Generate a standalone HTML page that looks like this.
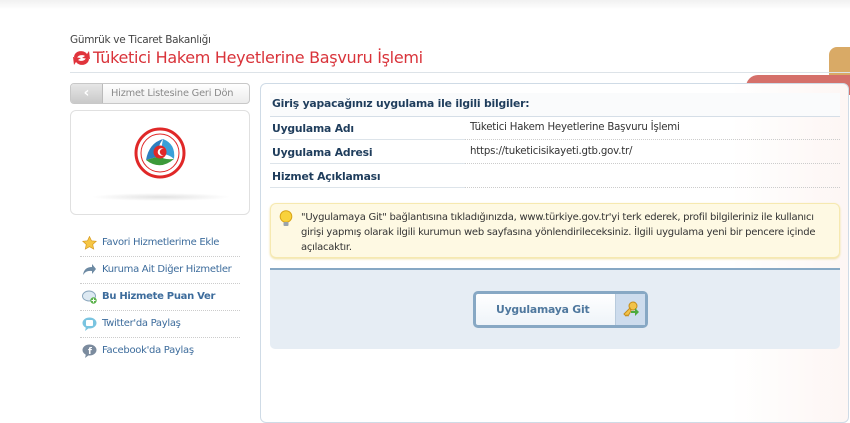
<!DOCTYPE html>
<html><head><meta charset="utf-8"><style>
*{margin:0;padding:0;box-sizing:border-box}
body{width:850px;height:414px;overflow:hidden;background:#fff;font-family:"DejaVu Sans","Liberation Sans",sans-serif;position:relative;color:#333}
.abs{position:absolute}
.topbar{left:0;top:0;width:850px;height:9px;background:linear-gradient(#f1f1f1,#fafafa 70%,#fff)}
.sub{left:70px;top:34px;font-size:10.5px;color:#444;letter-spacing:-0.3px}
.title{left:93px;top:48px;font-size:16px;color:#d9333a;letter-spacing:-0.3px}
.hr{left:70px;top:72px;width:780px;height:1px;background:#dde3e8}
.back{left:70px;top:83px;width:180px;height:21px;border:1px solid #c8c8c8;border-radius:4px;background:linear-gradient(#fff,#ececec)}
.back .l{position:absolute;left:0;top:0;width:32px;height:19px;background:linear-gradient(#e6e6e6,#c9c9c9);border-right:1px solid #bbb;border-radius:3px 0 0 3px;color:#fff;font-size:14px;text-align:center;line-height:18px;font-weight:bold}
.back .t{position:absolute;left:40px;top:4px;font-size:9.8px;color:#8a8a8a;letter-spacing:-0.2px}
.logo{left:70px;top:110px;width:180px;height:105px;border:1px solid #e0e0e0;border-radius:6px}
.links{left:80px;top:230px;width:160px}
.lk{height:27px;border-bottom:1px dotted #ccc;font-size:10px;color:#3d6c9c;padding-left:22px;line-height:26px;position:relative;letter-spacing:-0.3px}
.lk:last-child{border:none}
.ic{position:absolute;left:2px;top:6px;width:15px;height:14px}
.panel{left:260px;top:83px;width:589px;height:340px;border:1px solid #cfdbe6;border-radius:6px;background:linear-gradient(90deg,#fff 80%,#fdf6f4)}
.row{position:absolute;left:272px;width:570px;font-size:10.8px;font-weight:bold;color:#1f3d5c;letter-spacing:-0.2px}
.val{position:absolute;left:470px;font-size:10.2px;color:#333;letter-spacing:-0.2px}
.line{position:absolute;height:1px}
.info{left:270px;top:203px;width:570px;height:55px;background:#fef9e3;border:1px solid #f6e9b0;border-radius:6px;box-shadow:0 1px 2px #eedf9c}
.info p{position:absolute;left:30px;top:6px;width:535px;font-size:10px;line-height:15px;color:#333;letter-spacing:-0.25px}
.blue{left:270px;top:268px;width:570px;height:81px;background:#e6edf4;border-top:2px solid #87a8c4;border-radius:0 0 5px 5px}
.btn{left:473px;top:291px;width:175px;height:37px;border:3px solid #87a8c4;border-radius:5px;background:linear-gradient(#fff,#eef4f9)}
.btn .t{position:absolute;left:20px;top:9px;font-size:10.8px;font-weight:bold;color:#4f789e;letter-spacing:-0.2px}
.btn .k{position:absolute;right:0;top:0;width:30px;height:31px;background:#cddced;border-left:1px solid #b8cbdd}
</style></head><body>
<div class="abs topbar"></div>
<div class="abs" style="left:829px;top:47px;width:30px;height:30px;background:#d9aa66;border-radius:8px 0 0 0"></div>
<div class="abs" style="left:746px;top:75px;width:110px;height:20px;background:#d5706a;border-radius:12px 0 0 0"></div>
<div class="abs sub">Gümrük ve Ticaret Bakanlığı</div>
<svg class="abs" style="left:71px;top:49px" width="21" height="18" viewBox="0 0 21 18"><path d="M3 8 A7 6 0 0 1 16 5 L18 2 L19 10 L11 9 L14 7 A5 4 0 0 0 6 9Z" fill="#e0343c"/><path d="M18 10 A7 6 0 0 1 5 13 L3 16 L2 8 L10 9 L7 11 A5 4 0 0 0 15 9Z" fill="#e0343c"/></svg>
<div class="abs title">Tüketici Hakem Heyetlerine Başvuru İşlemi</div>
<div class="abs hr"></div>
<div class="abs back"><div class="l">‹</div><div class="t">Hizmet Listesine Geri Dön</div></div>
<div class="abs logo">
<svg style="position:absolute;left:62px;top:15px" width="54" height="54" viewBox="0 0 54 54"><circle cx="27" cy="27" r="24" fill="#fff" stroke="#e02828" stroke-width="3"/><circle cx="27" cy="27" r="19" fill="none" stroke="#e02828" stroke-width="1"/><path d="M13 34 Q16 17 30 13 Q23 22 27 30Z" fill="#2d7fc0"/><path d="M30 13 Q43 18 41 33 Q33 26 27 30Z" fill="#3aa0d8"/><path d="M13 34 Q27 45 41 33 Q30 34 27 30Z" fill="#3c9a3a"/><circle cx="27" cy="26" r="6.5" fill="#e02828"/><circle cx="28.5" cy="26" r="3.8" fill="#fff"/><circle cx="30" cy="26" r="3.2" fill="#e02828"/></svg>
<div style="position:absolute;left:20px;top:82px;width:140px;height:8px;background:radial-gradient(ellipse at center,#e2e2e2,#fff 70%)"></div>
</div>
<div class="abs links">
<div class="lk"><svg class="ic" viewBox="0 0 15 14"><path d="M7.5 0.5l2 4.3 4.7.5-3.5 3.2 1 4.6-4.2-2.4-4.2 2.4 1-4.6L.8 5.3l4.7-.5z" fill="#f6c644" stroke="#d79a20" stroke-width=".7"/></svg>Favori Hizmetlerime Ekle</div>
<div class="lk"><svg class="ic" viewBox="0 0 15 14"><path d="M1 12 Q2 4 10 4 L10 1 L14 6 L10 11 L10 8 Q4 7 1 12Z" fill="#6d8aa3"/></svg>Kuruma Ait Diğer Hizmetler</div>
<div class="lk" style="font-weight:bold"><svg class="ic" viewBox="0 0 15 14"><ellipse cx="7" cy="6" rx="6.5" ry="5" fill="#dde9f2" stroke="#8aa6bd"/><circle cx="11.5" cy="10.5" r="3.2" fill="#5ab24a"/><path d="M11.5 8.5v4M9.5 10.5h4" stroke="#fff"/></svg>Bu Hizmete Puan Ver</div>
<div class="lk"><svg class="ic" viewBox="0 0 15 14"><ellipse cx="7.5" cy="6" rx="7" ry="5.5" fill="#7ac4e0"/><rect x="4" y="3" width="7" height="6" fill="#fff" rx="1"/><path d="M4 10 L3 14 L7 11Z" fill="#7ac4e0"/></svg>Twitter'da Paylaş</div>
<div class="lk"><svg class="ic" viewBox="0 0 15 14"><ellipse cx="7.5" cy="6" rx="7" ry="5.5" fill="#7b8b9e"/><text x="6" y="10" font-size="9" fill="#fff" font-weight="bold">f</text><path d="M4 10 L3 14 L7 11Z" fill="#7b8b9e"/></svg>Facebook'da Paylaş</div>
</div>
<div class="abs panel"></div>
<div class="abs" style="left:270px;top:93px;width:570px;height:23px;background:#fafbfc"></div>
<div class="row" style="top:97px">Giriş yapacağınız uygulama ile ilgili bilgiler:</div>
<div class="line" style="left:270px;top:116px;width:570px;background:#d5dee7"></div>
<div class="row" style="top:122px">Uygulama Adı</div><div class="val" style="top:122px">Tüketici Hakem Heyetlerine Başvuru İşlemi</div>
<div class="line" style="left:270px;top:139px;width:195px;background:#dde4ea"></div><div class="line" style="left:465px;top:139px;width:375px;border-top:1px dotted #ccc"></div>
<div class="row" style="top:146px">Uygulama Adresi</div><div class="val" style="top:146px">https://tuketicisikayeti.gtb.gov.tr/</div>
<div class="line" style="left:270px;top:163px;width:195px;background:#dde4ea"></div><div class="line" style="left:465px;top:163px;width:375px;border-top:1px dotted #ccc"></div>
<div class="row" style="top:170px">Hizmet Açıklaması</div>
<div class="line" style="left:270px;top:187px;width:195px;background:#dde4ea"></div><div class="line" style="left:465px;top:187px;width:375px;border-top:1px dotted #ccc"></div>
<div class="abs info"><svg style="position:absolute;left:8px;top:6px" width="14" height="18" viewBox="0 0 14 18"><circle cx="7" cy="6.5" r="5.8" fill="#f9d23c" stroke="#d9a418"/><rect x="4.5" y="12" width="5" height="4" fill="#9aa3ac" rx="1"/></svg><p>"Uygulamaya Git" bağlantısına tıkladığınızda, www.türkiye.gov.tr'yi terk ederek, profil bilgileriniz ile kullanıcı girişi yapmış olarak ilgili kurumun web sayfasına yönlendirileceksiniz. İlgili uygulama yeni bir pencere içinde açılacaktır.</p></div>
<div class="abs blue"></div>
<div class="abs btn"><div class="t">Uygulamaya Git</div><div class="k"><svg style="position:absolute;left:6px;top:7px" width="18" height="17" viewBox="0 0 18 17"><circle cx="11" cy="5" r="4" fill="#f2c34a" stroke="#c58d1a"/><path d="M8 7 L2 13 L4 15 L5 14 L6 15 L9 10Z" fill="#f2c34a" stroke="#c58d1a"/><path d="M9 10 h4 v-3 l4 4 -4 4 v-3 h-4z" fill="#4caa3c"/></svg></div></div>
</body></html>
